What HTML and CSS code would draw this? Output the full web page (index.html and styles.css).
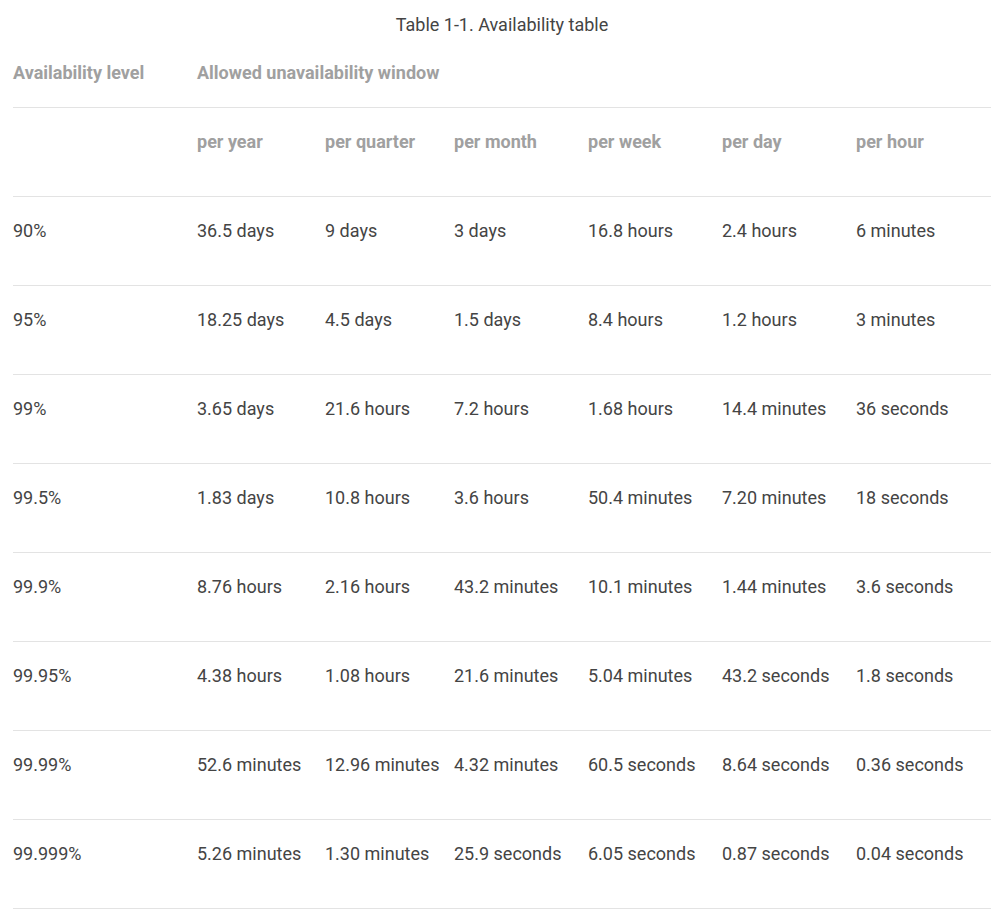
FILE: index.html
```html
<!DOCTYPE html>
<html>
<head>
<meta charset="utf-8">
<link rel="stylesheet" href="styles.css">
</head>
<body>
<div class="wrap">
<div class="title">Table 1-1. Availability table</div>
<table class="avail">
<colgroup>
<col class="c0"><col class="c1"><col class="c2"><col class="c3"><col class="c4"><col class="c5"><col class="c6">
</colgroup>
<thead>
<tr class="h1"><th>Availability level</th><th colspan="6">Allowed unavailability window</th></tr>
<tr class="h2"><th></th><th>per year</th><th>per quarter</th><th>per month</th><th>per week</th><th>per day</th><th>per hour</th></tr>
</thead>
<tbody>
<tr><td>90%</td><td>36.5 days</td><td>9 days</td><td>3 days</td><td>16.8 hours</td><td>2.4 hours</td><td>6 minutes</td></tr>
<tr><td>95%</td><td>18.25 days</td><td>4.5 days</td><td>1.5 days</td><td>8.4 hours</td><td>1.2 hours</td><td>3 minutes</td></tr>
<tr><td>99%</td><td>3.65 days</td><td>21.6 hours</td><td>7.2 hours</td><td>1.68 hours</td><td>14.4 minutes</td><td>36 seconds</td></tr>
<tr><td>99.5%</td><td>1.83 days</td><td>10.8 hours</td><td>3.6 hours</td><td>50.4 minutes</td><td>7.20 minutes</td><td>18 seconds</td></tr>
<tr><td>99.9%</td><td>8.76 hours</td><td>2.16 hours</td><td>43.2 minutes</td><td>10.1 minutes</td><td>1.44 minutes</td><td>3.6 seconds</td></tr>
<tr><td>99.95%</td><td>4.38 hours</td><td>1.08 hours</td><td>21.6 minutes</td><td>5.04 minutes</td><td>43.2 seconds</td><td>1.8 seconds</td></tr>
<tr><td>99.99%</td><td>52.6 minutes</td><td>12.96 minutes</td><td>4.32 minutes</td><td>60.5 seconds</td><td>8.64 seconds</td><td>0.36 seconds</td></tr>
<tr><td>99.999%</td><td>5.26 minutes</td><td>1.30 minutes</td><td>25.9 seconds</td><td>6.05 seconds</td><td>0.87 seconds</td><td>0.04 seconds</td></tr>
</tbody>
</table>
</div>
</body>
</html>
```

FILE: styles.css
```css
html, body {
  margin: 0;
  padding: 0;
  background: #ffffff;
}
body {
  font-family: Roboto, "Liberation Sans", sans-serif;
  color: #444444;
}
.wrap {
  padding-left: 13px;
  width: 978px;
}
.title {
  padding-top: 13px;
  height: 27px;
  line-height: 24px;
  font-size: 18px;
  text-align: center;
  color: #444444;
}
.avail {
  border-collapse: collapse;
  table-layout: fixed;
  width: 978px;
}
.c0 { width: 184px; }
.c1 { width: 128px; }
.c2 { width: 129px; }
.c3 { width: 134px; }
.c4 { width: 134px; }
.c5 { width: 134px; }
.c6 { width: 135px; }
.avail th, .avail td {
  text-align: left;
  vertical-align: top;
  padding: 0;
  font-size: 18px;
  line-height: 24px;
  white-space: nowrap;
}
.avail th {
  font-weight: 700;
  color: #a0a0a0;
}
.avail td {
  color: #444444;
}
.h1 th {
  padding-top: 21px;
  padding-bottom: 22px;
  border-bottom: 1px solid #e3e3e3;
}
.h2 th, .avail tbody td {
  padding-top: 22px;
  padding-bottom: 42px;
  border-bottom: 1px solid #e3e3e3;
}
```
